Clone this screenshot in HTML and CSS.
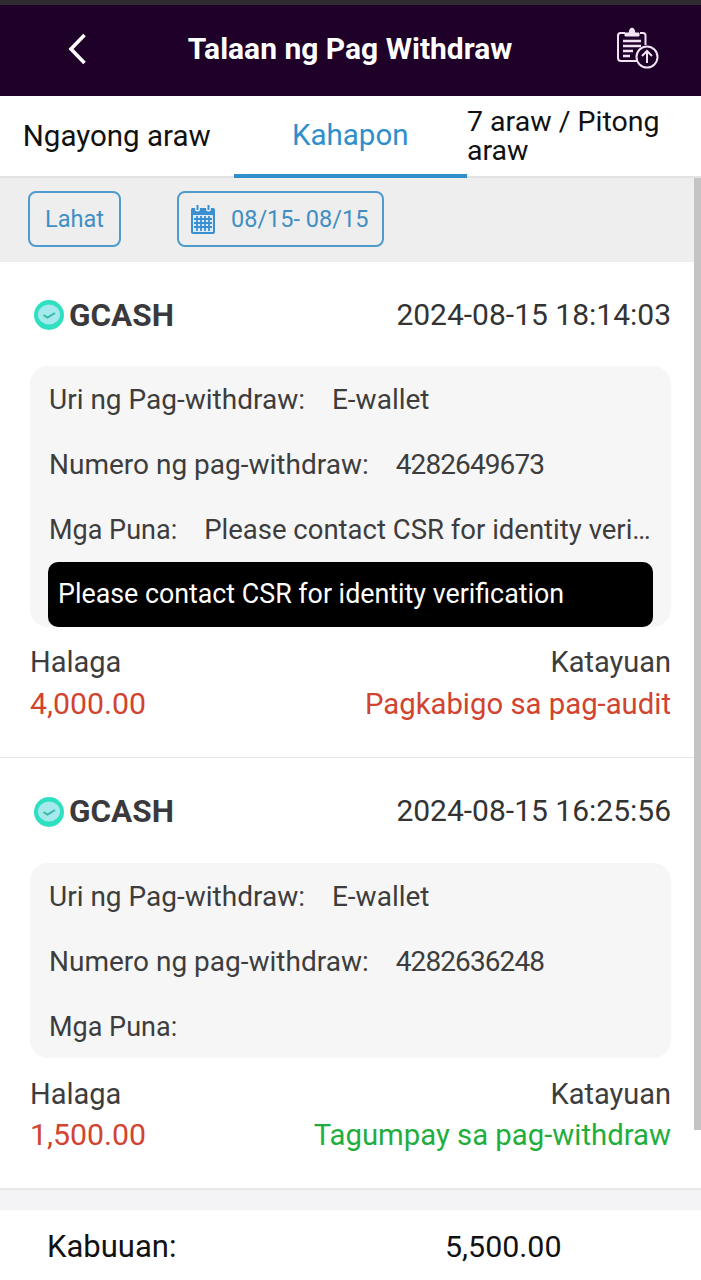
FILE: index.html
```html
<!DOCTYPE html>
<html lang="en">
<head>
    <meta charset="UTF-8">
    <meta name="viewport" content="width=device-width, initial-scale=1.0">
    <title>Talaan ng Pag Withdraw</title>
    <link rel="stylesheet" href="styles.css">
</head>
<body>
<div class="page">
    <div class="status-strip"></div>
    <header class="topbar">
        <svg class="back-icon" width="24" height="36" viewBox="0 0 24 36" fill="none">
            <path d="M18.5 4 L5 18 L18.5 32" stroke="#fff" stroke-width="3.6"/>
        </svg>
        <h1 class="topbar-title">Talaan ng Pag Withdraw</h1>
        <svg class="record-icon" width="44" height="44" viewBox="0 0 44 44" fill="none" stroke="#f1e3f4" stroke-width="2">
            <path d="M9 7 H4.5 Q2 7 2 9.5 V32 Q2 35 5 35 H22"/>
            <path d="M24 7 H27 Q29.500 7 29.500 9.500 V19"/>
            <path d="M9 10 H23 V7 H19 Q18.500 2 16 2 Q13.500 2 13 7 H9 Z" fill="#f1e3f4" stroke-width="1"/>
            <path d="M7 15 H25 M7 20 H25 M7 25 H17 M7 30 H14" stroke-width="2.400"/>
            <circle cx="31" cy="31" r="10.500" fill="#1f0028"/>
            <path d="M31 37 V25 M26 30 L31 25 L36 30"/>
        </svg>
    </header>

    <nav class="tabs">
        <div class="tab">Ngayong araw</div>
        <div class="tab tab-active">Kahapon</div>
        <div class="tab tab-wrap">7 araw / Pitong araw</div>
    </nav>

    <div class="filters">
        <div class="filter-btn filter-all">Lahat</div>
        <div class="filter-btn filter-date">
            <svg width="26" height="29" viewBox="0 0 26 29">
                <path d="M2 3 H23 Q25 3 25 5 V27 Q25 29 23 29 H3 Q1 29 1 27 V5 Q1 3 2 3 Z" fill="#3a8fd0"/>
                <rect x="3" y="10" width="20" height="17" fill="#dcebf6"/>
                <circle cx="7.500" cy="4" r="2.500" fill="#eef0f2"/>
                <circle cx="18.500" cy="4" r="2.500" fill="#eef0f2"/>
                <path d="M7.500 0 V5 M18.500 0 V5" stroke="#3a8fd0" stroke-width="2"/>
                <path d="M4 14 H22 M4 18 H22 M4 22 H22 M7 11 V26 M11 11 V26 M15 11 V26 M19 11 V26" stroke="#3a8fd0" stroke-width="1.800"/>
            </svg>
            <span>08/15- 08/15</span>
        </div>
    </div>

    <section class="record">
        <div class="record-head">
            <div class="brand">
                <svg class="brand-icon" width="30" height="30" viewBox="0 0 30 30">
                    <circle cx="15" cy="15" r="15" fill="#2fe0c0"/>
                    <ellipse cx="15" cy="14.500" rx="11" ry="10" fill="#a6e9ec"/>
                    <path d="M9.500 15 L13.500 17.500 L21 13" stroke="#35b9a8" stroke-width="2" fill="none"/>
                </svg>
                <span>GCASH</span>
            </div>
            <div class="record-time">2024-08-15 18:14:03</div>
        </div>
        <div class="info-box">
            <div class="info-row"><span>Uri ng Pag-withdraw:</span><span>E-wallet</span></div>
            <div class="info-row"><span>Numero ng pag-withdraw:</span><span class="info-num">4282649673</span></div>
            <div class="info-row"><span class="info-short">Mga Puna:</span><span class="info-note">Please contact CSR for identity veri…</span></div>
            <div class="tooltip">Please contact CSR for identity verification</div>
        </div>
        <div class="sum-row">
            <div>
                <div class="sum-label">Halaga</div>
                <div class="sum-value sum-money amount">4,000.00</div>
            </div>
            <div class="sum-right">
                <div class="sum-label">Katayuan</div>
                <div class="sum-value amount">Pagkabigo sa pag-audit</div>
            </div>
        </div>
    </section>

    <section class="record record-two">
        <div class="record-head">
            <div class="brand">
                <svg class="brand-icon" width="30" height="30" viewBox="0 0 30 30">
                    <circle cx="15" cy="15" r="15" fill="#2fe0c0"/>
                    <ellipse cx="15" cy="14.500" rx="11" ry="10" fill="#a6e9ec"/>
                    <path d="M9.500 15 L13.500 17.500 L21 13" stroke="#35b9a8" stroke-width="2" fill="none"/>
                </svg>
                <span>GCASH</span>
            </div>
            <div class="record-time">2024-08-15 16:25:56</div>
        </div>
        <div class="info-box">
            <div class="info-row"><span>Uri ng Pag-withdraw:</span><span>E-wallet</span></div>
            <div class="info-row"><span>Numero ng pag-withdraw:</span><span class="info-num">4282636248</span></div>
            <div class="info-row"><span class="info-short">Mga Puna:</span></div>
        </div>
        <div class="sum-row">
            <div>
                <div class="sum-label">Halaga</div>
                <div class="sum-value sum-money amount">1,500.00</div>
            </div>
            <div class="sum-right">
                <div class="sum-label">Katayuan</div>
                <div class="sum-value success">Tagumpay sa pag-withdraw</div>
            </div>
        </div>
    </section>

    <div class="gap-band"></div>

    <footer class="total">
        <span class="total-label">Kabuuan:</span>
        <span>5,500.00</span>
    </footer>

    <div class="scrollbar"></div>
</div>
</body>
</html>
```

FILE: styles.css
```css
*{
    box-sizing: border-box;
}
body{
    margin: 0;
    background: #fff;
    font-family: "Roboto", "Noto Sans", sans-serif;
}
.page{
    position: relative;
    width: 701px;
    height: 1280px;
    overflow: hidden;
}
.status-strip{
    height: 5px;
    background: #2e2c30;
}
.topbar{
    height: 91px;
    background: #1f0028;
    display: flex;
    align-items: center;
    justify-content: space-between;
    padding: 0 41px 0 66px;
}
.back-icon{
    margin-top: -3px;
}
.topbar-title{
    margin: -4px 0 0 -6px;
    font-size: 30px;
    font-weight: 700;
    color: #fff;
}
.record-icon{
    margin-top: -6px;
}
.tabs{
    height: 82px;
    display: flex;
    border-bottom: 2px solid #e3e3e3;
}
.tab{
    width: 233.5px;
    display: flex;
    align-items: center;
    justify-content: center;
    font-size: 29.5px;
    color: #111;
}
.tab-active{
    color: #2f8fcb;
    border-bottom: 4px solid #2f8fcb;
    height: 82px;
}
.tab-wrap{
    justify-content: flex-start;
    text-align: left;
    font-size: 28.5px;
    line-height: 29px;
    padding-right: 30px;
}
.filters{
    height: 84px;
    background: #eeeeef;
    display: flex;
    gap: 56px;
    padding: 13px 0 0 28px;
}
.filter-btn{
    height: 56px;
    border: 2px solid #4f9bcb;
    border-radius: 8px;
    display: flex;
    align-items: center;
    font-size: 23.5px;
    color: #3f8fc4;
}
.filter-all{
    width: 93px;
    justify-content: center;
}
.filter-date{
    width: 207px;
    gap: 15px;
    padding-left: 11px;
}
.record{
    height: 496px;
    padding: 0 30px;
    border-bottom: 1px solid #e4e4e4;
}
.record-two{
    height: 432px;
    border-bottom: 2px solid #e8e8e8;
}
.record-head{
    height: 104px;
    display: flex;
    justify-content: space-between;
    align-items: center;
    padding-left: 4px;
}
.record-two .record-head{
    height: 105px;
}
.brand{
    display: flex;
    align-items: center;
    gap: 5px;
    padding-top: 2px;
    font-size: 31.5px;
    font-weight: 700;
    color: #3a3a3c;
}
.record-time{
    font-size: 30px;
    color: #333;
}
.info-box{
    background: #f6f6f7;
    border-radius: 18px;
    padding: 0 18px 0 18px;
}
.info-row{
    height: 65px;
    padding: 2px 0 0 1px;
    display: flex;
    align-items: center;
    gap: 27px;
    font-size: 28px;
    color: #3d3d3d;
}
.info-num{
    font-size: 28px;
    letter-spacing: -0.9px;
}
.info-short{
    font-size: 27px;
}
.info-note{
    font-size: 27.5px;
    white-space: nowrap;
}
.tooltip{
    height: 65px;
    margin-top: 1px;
    background: #000;
    color: #fff;
    font-size: 26.8px;
    line-height: 65px;
    padding-left: 10px;
    border-radius: 10px;
}
.sum-row{
    display: flex;
    justify-content: space-between;
    margin-top: 15px;
}
.record-two .sum-row{
    margin-top: 16px;
}
.sum-right{
    text-align: right;
}
.sum-label{
    font-size: 29px;
    line-height: 40px;
    color: #3d3d3d;
}
.sum-value{
    font-size: 29.3px;
    line-height: 44px;
}
.record-two .sum-value{
    line-height: 42px;
}
.sum-money{
    font-size: 30.3px;
}
.amount{
    color: #d1442f;
}
.success{
    color: #1fae3e;
}
.gap-band{
    height: 20px;
    background: #f4f4f6;
}
.total{
    height: 70px;
    display: grid;
    grid-template-columns: 398px auto;
    align-items: center;
    padding: 3px 0 0 47px;
    font-size: 30.4px;
    color: #111;
}
.total-label{
    font-size: 31px;
}
.scrollbar{
    position: absolute;
    right: 0;
    top: 178px;
    width: 7px;
    height: 952px;
    background: #c4c4c4;
}
```
